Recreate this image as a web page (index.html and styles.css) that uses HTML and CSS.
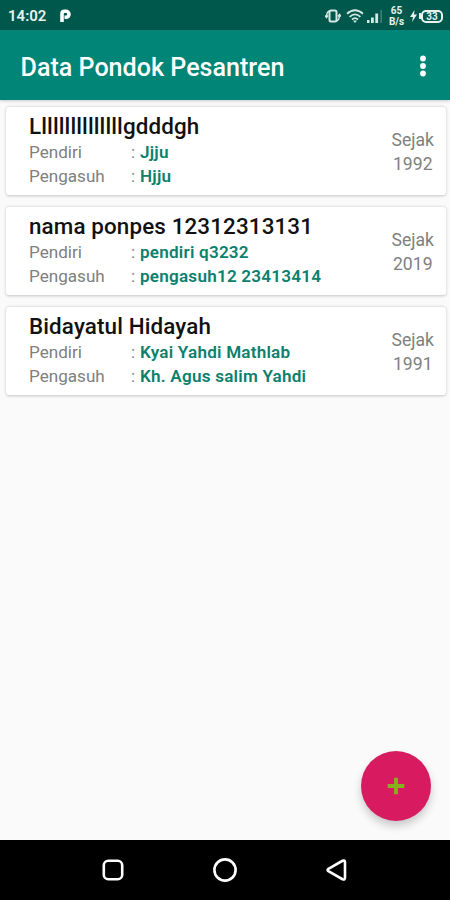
FILE: index.html
```html
<!DOCTYPE html>
<html lang="id">
  <head>
    <meta charset="UTF-8" />
    <meta name="viewport" content="width=device-width, initial-scale=1.0" />
    <title>Data Pondok Pesantren</title>
    <link rel="stylesheet" href="styles.css" />
  </head>
  <body>
    <div class="status-bar">
      <span class="clock">14:02</span>
      <svg width="14" height="16" viewBox="0 0 14 16">
        <path d="M4 14V5.5Q4 3.3 6.5 3.3H8A2.9 2.9 0 0 1 8 9.3H6.5" fill="none" stroke="#fff" stroke-width="3.6" />
      </svg>
      <div class="status-icons">
        <svg width="16" height="16" viewBox="0 0 16 16" fill="none" stroke="#d5e8e4" stroke-width="2">
          <rect x="4.5" y="2.5" width="7" height="11" rx="1.5" />
          <path d="M4.500 3Q1.500 4 1.500 9M0 7.500L1.500 9.500L3 7.500M11.500 13Q14.500 12 14.500 7M13 8.500L14.500 6.500L16 8.500" stroke-width="1.4" />
        </svg>
        <svg class="wifi" width="18" height="14" viewBox="0 0 18 14" fill="none" stroke="#d5e8e4" stroke-width="1.8">
          <path d="M1 4.8Q9-2.2 17 4.8M3.6 7.8Q9 3 14.4 7.8M6 10.5Q9 7.8 12 10.5" />
          <path d="M7 11.5H11L9 14Z" fill="#d5e8e4" stroke="none" />
        </svg>
        <svg class="signal" width="16" height="13" viewBox="0 0 16 13" fill="#d5e8e4">
          <path d="M0 10h2.500v3H0zM4 7.500h2.800v5.500H4zM8.300 3.500h2.800v9.500H8.300z" />
          <path d="M13.500 0h1.300v13h-1.300z" opacity=".35" />
        </svg>
        <div class="speed">
          <span>65</span>
          <span>B/s</span>
        </div>
        <svg width="7" height="12" viewBox="0 0 7 12">
          <path d="M4.5 0L0 7H3L2 12L7 4.5H4Z" fill="#e8f3f0" />
        </svg>
        <span class="nub"></span>
        <span class="battery">33</span>
      </div>
    </div>

    <header class="app-bar">
      <h1>Data Pondok Pesantren</h1>
      <svg width="8" height="22" viewBox="0 0 8 22" fill="#fff">
        <circle cx="4" cy="3.5" r="2.9" />
        <circle cx="4" cy="11" r="2.9" />
        <circle cx="4" cy="18.5" r="2.9" />
      </svg>
    </header>

    <main class="list">
      <div class="card">
        <div class="info">
          <h2>Lllllllllllllllgdddgh</h2>
          <p><span class="label">Pendiri</span><span class="colon">:</span><b>Jjju</b></p>
          <p><span class="label">Pengasuh</span><span class="colon">:</span><b>Hjju</b></p>
        </div>
        <div class="since">Sejak<br />1992</div>
      </div>
      <div class="card">
        <div class="info">
          <h2>nama ponpes 12312313131</h2>
          <p><span class="label">Pendiri</span><span class="colon">:</span><b>pendiri q3232</b></p>
          <p><span class="label">Pengasuh</span><span class="colon">:</span><b>pengasuh12 23413414</b></p>
        </div>
        <div class="since">Sejak<br />2019</div>
      </div>
      <div class="card">
        <div class="info">
          <h2>Bidayatul Hidayah</h2>
          <p><span class="label">Pendiri</span><span class="colon">:</span><b>Kyai Yahdi Mathlab</b></p>
          <p><span class="label">Pengasuh</span><span class="colon">:</span><b>Kh. Agus salim Yahdi</b></p>
        </div>
        <div class="since">Sejak<br />1991</div>
      </div>
    </main>

    <button class="fab" aria-label="Tambah">
      <svg width="18" height="18" viewBox="0 0 18 18">
        <path d="M9 .7V17.3M.7 9H17.3" stroke="#86b01c" stroke-width="3.8" />
      </svg>
    </button>

    <nav class="nav-bar">
      <svg width="24" height="24" viewBox="0 0 24 24">
        <rect x="2.8" y="2.8" width="18.4" height="18.4" rx="4.5" />
      </svg>
      <svg width="24" height="24" viewBox="0 0 24 24">
        <circle cx="12" cy="12" r="10.6" />
      </svg>
      <svg width="24" height="24" viewBox="0 0 24 24">
        <path d="M3.4 10.9L17.5 2.8Q20 1.9 20 4.2V19.8Q20 22.1 17.5 21.2L3.4 13.1Q1.8 12 3.4 10.9Z" />
      </svg>
    </nav>
  </body>
</html>
```

FILE: styles.css
```css
* {
  box-sizing: border-box;
  margin: 0;
  padding: 0;
}

body {
  height: 900px;
  display: flex;
  flex-direction: column;
  overflow: hidden;
  background: #fafafa;
  font-family: Roboto, sans-serif;
}

/* Status bar */
.status-bar {
  height: 30px;
  flex: none;
  display: flex;
  align-items: center;
  padding: 2px 7px 0 8px;
  background: #00574b;
  color: #e8f3f0;
}

.clock {
  width: 50px;
  font-size: 15px;
  font-weight: 600;
}

.status-icons {
  margin-left: auto;
  display: flex;
  align-items: center;
}

.wifi {
  margin-left: 5px;
}

.signal {
  margin-left: 3px;
}

.speed {
  width: 19px;
  margin: 0 4px;
  display: flex;
  flex-direction: column;
  align-items: center;
  font-size: 10px;
  font-weight: 700;
  line-height: 11px;
}

.nub {
  width: 2px;
  height: 6px;
  margin-left: 2px;
  background: #e8f3f0;
}

.battery {
  width: 22px;
  height: 13px;
  border: 2px solid #e8f3f0;
  border-radius: 5px;
  font-size: 10px;
  font-weight: 700;
  line-height: 9px;
  text-align: center;
}

/* App bar */
.app-bar {
  height: 70px;
  flex: none;
  display: flex;
  align-items: center;
  justify-content: space-between;
  padding: 2px 23px 0 20.5px;
  background: #008577;
  box-shadow: 0 1px 3px rgba(0, 0, 0, 0.2);
  color: #fff;
}

.app-bar h1 {
  font-size: 25.1px;
  font-weight: 500;
  padding-top: 2px;
}

/* Cards */
.list {
  flex: 1;
  display: flex;
  flex-direction: column;
  gap: 12px;
  padding: 7px 4px 0 6px;
}

.card {
  height: 88px;
  display: flex;
  justify-content: space-between;
  padding: 5px 12px 0 23px;
  background: #fff;
  border-radius: 3px;
  box-shadow: 0 0.5px 3px rgba(0, 0, 0, 0.22);
}

.card h2 {
  margin-bottom: 1px;
  color: #111;
  font-size: 22.4px;
  font-weight: 500;
  letter-spacing: 0.13px;
  line-height: 28px;
  white-space: nowrap;
}

.card p {
  display: flex;
  font-size: 17.1px;
  line-height: 23.5px;
  color: #808080;
  white-space: nowrap;
}

.label {
  width: 102px;
}

.colon {
  width: 9px;
}

.card b {
  color: #0b806d;
  font-weight: 600;
  letter-spacing: 0.22px;
}

.since {
  padding-top: 16px;
  color: #808080;
  font-size: 17.6px;
  line-height: 24px;
  text-align: center;
}

/* Add button floats over the list */
.fab {
  position: absolute;
  right: 19.5px;
  bottom: 79.5px;
  width: 70px;
  height: 70px;
  display: flex;
  align-items: center;
  justify-content: center;
  border: none;
  border-radius: 50%;
  background: #d81b60;
  box-shadow: 0 5px 9px rgba(0, 0, 0, 0.2);
}

/* Navigation bar */
.nav-bar {
  height: 60px;
  flex: none;
  display: flex;
  align-items: center;
  justify-content: space-between;
  padding: 0 101px;
  background: #000;
}

.nav-bar svg {
  fill: none;
  stroke: #fff;
  stroke-width: 2.6;
}
```
